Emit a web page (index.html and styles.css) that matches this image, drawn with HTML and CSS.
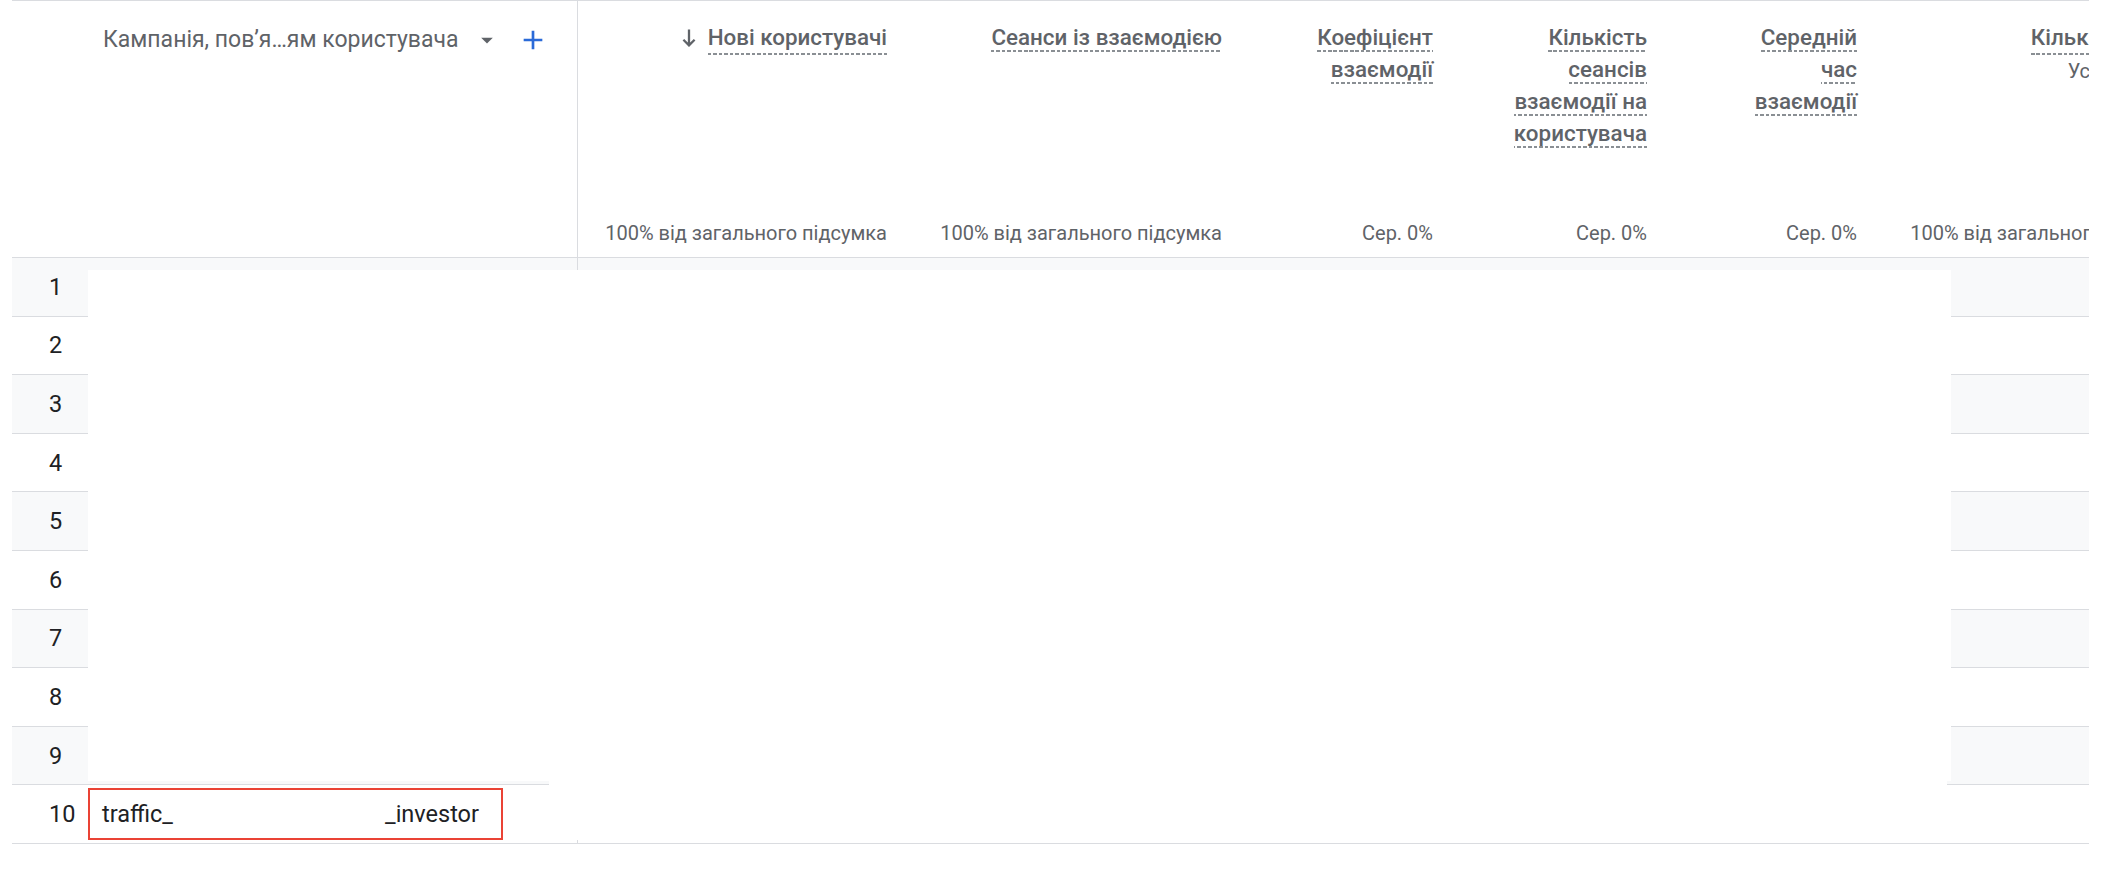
FILE: index.html
```html
<!DOCTYPE html>
<html lang="uk">
<head>
<meta charset="utf-8">
<title>Таблиця звіту</title>
<link rel="stylesheet" href="styles.css">
</head>
<body>
<div class="viewport">
  <div class="table">
    <div class="row head">
      <div class="cell num"></div>
      <div class="cell dim head-dim">
        <span class="dim-label">Кампанія, пов’я…ям користувача</span>
        <svg class="ic drop" viewBox="0 0 24 24"><path d="M7 10l5 5 5-5z"/></svg>
        <svg class="ic add" viewBox="0 0 24 24"><path d="M19 13h-6v6h-2v-6H5v-2h6V5h2v6h6v2z"/></svg>
      </div>
      <div class="cell metric">
        <div class="mname sorted">
          <svg class="sort" viewBox="0 0 14 18"><path d="M7 0.5V16.5M1.4 10.8L7 16.4L12.6 10.8"/></svg>
          <span class="ul">Нові користувачі</span>
        </div>
        <div class="mtotal">100% від загального підсумка</div>
      </div>
      <div class="cell metric">
        <div class="mname"><span class="ul">Сеанси із взаємодією</span></div>
        <div class="mtotal">100% від загального підсумка</div>
      </div>
      <div class="cell metric">
        <div class="mname"><span class="ul">Коефіцієнт<br>взаємодії</span></div>
        <div class="mtotal">Сер. 0%</div>
      </div>
      <div class="cell metric">
        <div class="mname"><span class="ul">Кількість<br>сеансів<br>взаємодії на<br>користувача</span></div>
        <div class="mtotal">Сер. 0%</div>
      </div>
      <div class="cell metric">
        <div class="mname"><span class="ul">Середній<br>час<br>взаємодії</span></div>
        <div class="mtotal">Сер. 0%</div>
      </div>
      <div class="cell metric">
        <div class="mname events">
          <span class="ul">Кількість подій</span>
          <div class="evsel">Усі події<svg class="ic drop-sm" viewBox="0 0 24 24"><path d="M7 10l5 5 5-5z"/></svg></div>
        </div>
        <div class="mtotal">100% від загального підсумка</div>
      </div>
    </div>

    <div class="row odd"><div class="cell num">1</div><div class="cell dim"></div><div class="cell"></div><div class="cell"></div><div class="cell"></div><div class="cell"></div><div class="cell"></div><div class="cell"></div></div>
    <div class="row"><div class="cell num">2</div><div class="cell dim"></div><div class="cell"></div><div class="cell"></div><div class="cell"></div><div class="cell"></div><div class="cell"></div><div class="cell"></div></div>
    <div class="row odd"><div class="cell num">3</div><div class="cell dim"></div><div class="cell"></div><div class="cell"></div><div class="cell"></div><div class="cell"></div><div class="cell"></div><div class="cell"></div></div>
    <div class="row"><div class="cell num">4</div><div class="cell dim"></div><div class="cell"></div><div class="cell"></div><div class="cell"></div><div class="cell"></div><div class="cell"></div><div class="cell"></div></div>
    <div class="row odd"><div class="cell num">5</div><div class="cell dim"></div><div class="cell"></div><div class="cell"></div><div class="cell"></div><div class="cell"></div><div class="cell"></div><div class="cell"></div></div>
    <div class="row"><div class="cell num">6</div><div class="cell dim"></div><div class="cell"></div><div class="cell"></div><div class="cell"></div><div class="cell"></div><div class="cell"></div><div class="cell"></div></div>
    <div class="row odd"><div class="cell num">7</div><div class="cell dim"></div><div class="cell"></div><div class="cell"></div><div class="cell"></div><div class="cell"></div><div class="cell"></div><div class="cell"></div></div>
    <div class="row"><div class="cell num">8</div><div class="cell dim"></div><div class="cell"></div><div class="cell"></div><div class="cell"></div><div class="cell"></div><div class="cell"></div><div class="cell"></div></div>
    <div class="row odd"><div class="cell num">9</div><div class="cell dim"></div><div class="cell"></div><div class="cell"></div><div class="cell"></div><div class="cell"></div><div class="cell"></div><div class="cell"></div></div>
    <div class="row">
      <div class="cell num">10</div>
      <div class="cell dim">
        <div class="mark"><span>traffic_</span><span>_investor</span></div>
      </div>
      <div class="cell"></div><div class="cell"></div><div class="cell"></div><div class="cell"></div><div class="cell"></div><div class="cell"></div>
    </div>

    <div class="redact redact-a"></div>
    <div class="redact redact-b"></div>
  </div>
</div>
</body>
</html>
```

FILE: styles.css
```css
* { box-sizing: border-box; }
html, body { margin: 0; background: #ffffff; }
body {
  font-family: Roboto, "Noto Sans", "Liberation Sans", sans-serif;
  color: #202124;
}

.viewport {
  margin-left: 12px;
  width: 2077px;
  overflow: hidden;
}

.table {
  position: relative;
  width: 2201px;
  border-top: 1px solid #dadce0;
}

.row {
  display: grid;
  grid-template-columns: 76px 490px 329px 335px 211px 214px 210px 335px;
  height: 58.6px;
  border-bottom: 1px solid #dadce0;
}
.row.odd { background: #f8f9fa; }
.row.head { height: 257px; background: #fff; }

.cell { min-width: 0; }
.dim { border-right: 1px solid #dadce0; display: flex; align-items: center; }

.num {
  display: flex;
  align-items: center;
  padding-left: 37px;
  font-size: 23.5px;
  color: #202124;
}

/* header dimension */
.head-dim {
  align-items: flex-start;
  padding: 23px 28px 0 15px;
}
.dim-label {
  font-size: 23px;
  line-height: 32px;
  color: #5f6368;
  white-space: nowrap;
}
.ic { display: block; flex: none; }
.drop { width: 28px; height: 28px; margin: 2px 16px 0 auto; fill: #5f6368; }
.add { width: 32px; height: 32px; fill: #2a6ad8; }

/* header metrics */
.metric.cell {
  display: flex;
  flex-direction: column;
  justify-content: space-between;
  align-items: flex-end;
  padding: 20px 20px 12px 0;
  text-align: right;
}
.mname {
  font-size: 22.4px;
  font-weight: 500;
  line-height: 32px;
  color: #5f6368;
}
.mname.sorted { display: flex; align-items: center; gap: 12px; }
.mname.events { display: flex; flex-direction: column; align-items: flex-end; }
.sort {
  width: 14px; height: 18px; flex: none;
  fill: none; stroke: #5f6368; stroke-width: 2.3;
}
.ul {
  padding-bottom: 2px;
  background: repeating-linear-gradient(90deg, #8a8f94 0 3.5px, transparent 3.5px 5.5px) left bottom / 100% 2px no-repeat;
}
.evsel {
  display: flex;
  align-items: center;
  justify-content: flex-end;
  font-weight: 400;
  font-size: 20px;
  margin-right: 16px;
}
.drop-sm { width: 28px; height: 28px; fill: #5f6368; margin-left: 4px; }

.mtotal {
  font-size: 20px;
  line-height: 24px;
  color: #5f6368;
  white-space: nowrap;
}

/* highlighted row value */
.mark {
  width: 415px;
  height: 52px;
  border: 2px solid #ea4335;
  display: flex;
  align-items: center;
  justify-content: space-between;
  padding: 0 22px 0 12px;
  font-size: 23.5px;
  color: #202124;
}

/* redaction overlays covering hidden data */
.redact { position: absolute; background: #ffffff; }
.redact-a { left: 76px; top: 269px; width: 1863px; height: 511px; }
.redact-b { left: 537px; top: 780px; width: 1398px; height: 59px; }
```
